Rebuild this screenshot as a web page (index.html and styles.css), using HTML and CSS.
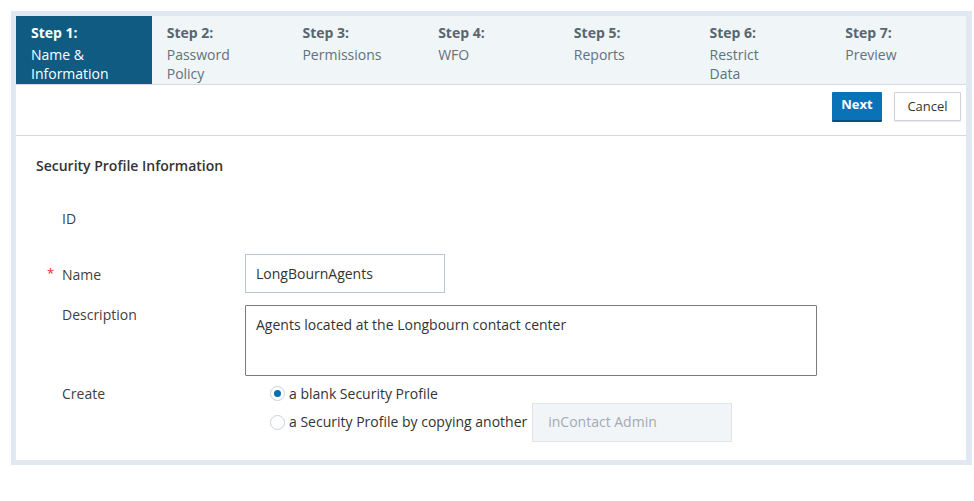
FILE: index.html
```html
<!DOCTYPE html>
<html lang="en">
<head>
<meta charset="utf-8">
<title>Security Profile Wizard</title>
<link rel="stylesheet" href="styles.css">
</head>
<body>
<div class="frame">
  <div class="steps">
    <div class="step active"><div class="step-title">Step 1:</div><div class="step-name">Name &amp; Information</div></div>
    <div class="step"><div class="step-title">Step 2:</div><div class="step-name">Password Policy</div></div>
    <div class="step"><div class="step-title">Step 3:</div><div class="step-name">Permissions</div></div>
    <div class="step"><div class="step-title">Step 4:</div><div class="step-name">WFO</div></div>
    <div class="step"><div class="step-title">Step 5:</div><div class="step-name">Reports</div></div>
    <div class="step"><div class="step-title">Step 6:</div><div class="step-name">Restrict Data</div></div>
    <div class="step"><div class="step-title">Step 7:</div><div class="step-name">Preview</div></div>
  </div>
  <div class="toolbar">
    <button class="btn btn-primary">Next</button>
    <button class="btn btn-default">Cancel</button>
  </div>
  <div class="content">
    <h2 class="section-title">Security Profile Information</h2>
    <div class="form">
      <div class="row row-id">
        <div class="label">ID</div>
        <div class="field"></div>
      </div>
      <div class="row row-name">
        <div class="label label-name"><span class="req">*</span>Name</div>
        <div class="field"><div class="input">LongBournAgents</div></div>
      </div>
      <div class="row row-desc">
        <div class="label label-desc">Description</div>
        <div class="field"><div class="textarea">Agents located at the Longbourn contact center</div></div>
      </div>
      <div class="row row-create">
        <div class="label label-create">Create</div>
        <div class="field">
          <div class="option opt-first"><span class="radio checked"></span>a blank Security Profile</div>
          <div class="option opt-second"><span class="radio"></span>a Security Profile by copying another<div class="input disabled">inContact Admin</div></div>
        </div>
      </div>
    </div>
  </div>
</div>
</body>
</html>
```
FILE: styles.css
```css
* { box-sizing: border-box; }
body {
  margin: 0;
  background: #fff;
  font-family: "Open Sans", "Noto Sans", sans-serif;
  font-size: 14px;
  color: #333;
}
.frame {
  margin: 11px 0 0 11px;
  width: 961px;
  border: 5px solid #e1e8f1;
  border-right-width: 6px;
  background: #fff;
}
.steps {
  display: grid;
  grid-template-columns: repeat(7, 1fr);
  height: 69px;
  background: #f0f5f8;
  border-bottom: 1px solid #d4dde5;
}
.step {
  padding: 8px 39px 0 15px;
  color: #62717c;
  line-height: 18.5px;
}
.step-title {
  font-weight: 700;
  margin-bottom: 3.5px;
  color: #58666f;
  white-space: nowrap;
}
.step.active {
  background: #0f5b81;
  color: #fff;
}
.step.active .step-title { color: #fff; }
.toolbar {
  display: flex;
  justify-content: flex-end;
  gap: 12px;
  height: 51px;
  padding: 7px 5px 0 0;
  border-bottom: 1px solid #d8d8d8;
}
.btn {
  font-family: "Open Sans", "Noto Sans", sans-serif;
  font-size: 13px;
  height: 30px;
  border-radius: 1px;
  cursor: pointer;
}
.btn-primary {
  width: 50px;
  background: #0a72b6;
  color: #fff;
  font-weight: 700;
  border: none;
  border-bottom: 2px solid #07507e;
  padding: 0 0 5px;
}
.btn-default {
  width: 67px;
  height: 29px;
  background: #fff;
  color: #333;
  border: 1px solid #cdd3d8;
  box-shadow: 0 1px 1px rgba(0,0,0,0.08);
  padding: 0 0 2px;
}
.content {
  padding: 20px 0 18px 20px;
}
.section-title {
  margin: 0;
  font-size: 14px;
  font-weight: 600;
  line-height: 20px;
  color: #333;
}
.form {
  padding-left: 26px;
}
.row {
  display: grid;
  grid-template-columns: 183px 1fr;
  line-height: 18px;
}
.label {
  position: relative;
  color: #3f3f3f;
}
.label-name { padding-top: 12px; }
.label-desc { padding-top: 1px; }
.label-create { padding-top: 1px; }
.req {
  position: absolute;
  left: -15px;
  top: 10px;
  color: #e1262d;
  font-size: 13px;
}
.row-id { margin-top: 34px; }
.row-name { margin-top: 26px; }
.row-desc { margin-top: 12px; }
.row-create { margin-top: 8px; }
.input {
  width: 200px;
  height: 39px;
  border: 1px solid #b9c7d2;
  padding: 0 10px;
  display: flex;
  align-items: center;
  color: #333;
}
.textarea {
  width: 572px;
  height: 71px;
  border: 1px solid #7b7b7b;
  border-radius: 1px;
  padding: 10px 10px;
  color: #333;
}
.option {
  display: flex;
  align-items: center;
  padding-left: 25px;
  color: #333;
}
.opt-first { height: 19px; }
.opt-second { height: 40px; margin-top: -1px; }
.radio {
  width: 15px;
  height: 15px;
  border-radius: 50%;
  border: 1px solid #c8d3dc;
  background: #fff;
  margin-right: 4px;
  flex: none;
  position: relative;
}
.radio.checked::after {
  content: "";
  position: absolute;
  left: 3px;
  top: 3px;
  width: 7px;
  height: 7px;
  border-radius: 50%;
  background: #0a6db0;
}
.input.disabled {
  margin-left: 5px;
  background: #f2f5f8;
  border-color: #dfe5ea;
  color: #a2aab2;
  padding-left: 15px;
}
```
